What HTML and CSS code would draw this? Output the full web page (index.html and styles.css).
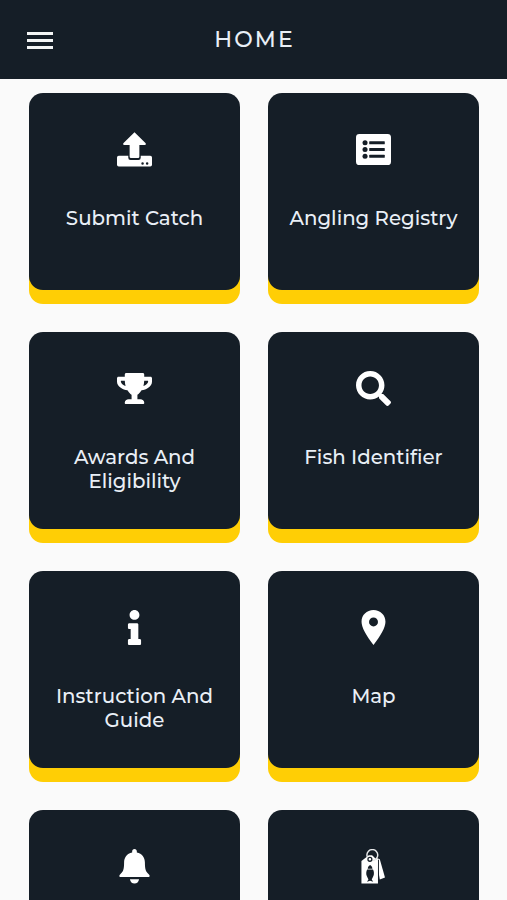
FILE: index.html
```html
<!DOCTYPE html>
<html lang="en">
<head>
<meta charset="utf-8">
<meta name="viewport" content="width=device-width, initial-scale=1">
<title>Home</title>
<link rel="stylesheet" href="styles.css">
</head>
<body>
<header class="topbar">
  <button class="menu" aria-label="Menu"><span></span><span></span><span></span></button>
  <h1 class="title">HOME</h1>
</header>
<main class="grid">
  <a class="card"><div class="face">
    <svg class="icon" viewBox="0 0 36 36"><path d="M18 .2 29.500 11.600q1 1.600-1 1.800H23v12q0 1.400-1.400 1.400h-7.200q-1.400 0-1.400-1.400v-12H7.500q-2-.2-1-1.800z"/><path fill-rule="evenodd" d="M1.800 24.400h9.800v2.200q0 2.300 2.300 2.300h8.200q2.300 0 2.300-2.300v-2.200h9.800q1.800 0 1.800 1.800v7.600q0 1.800-1.800 1.800H1.800Q0 35.600 0 33.800v-7.600q0-1.800 1.800-1.800zM25 32.300a1.300 1.300 0 1 0 2.600 0 1.300 1.300 0 1 0-2.600 0zm4.700 0a1.300 1.300 0 1 0 2.600 0 1.300 1.300 0 1 0-2.600 0z"/></svg>
    <span class="label">Submit Catch</span>
  </div></a>
  <a class="card"><div class="face">
    <svg class="icon" viewBox="0 0 36 36"><rect x="0" y="2" width="36" height="32" rx="3.500"/><g class="ink"><circle cx="9.300" cy="11" r="2.600"/><circle cx="9.300" cy="18" r="2.600"/><circle cx="9.300" cy="25" r="2.600"/><rect x="13.600" y="9.400" width="16" height="3.200" rx=".6"/><rect x="13.600" y="16.400" width="16" height="3.200" rx=".6"/><rect x="13.600" y="23.400" width="16" height="3.200" rx=".6"/></g></svg>
    <span class="label">Angling Registry</span>
  </div></a>
  <a class="card"><div class="face">
    <svg class="icon" viewBox="0 -32 576 576"><path d="M552 64H448V24c0-13.300-10.700-24-24-24H152c-13.300 0-24 10.700-24 24v40H24C10.700 64 0 74.700 0 88v56c0 35.700 22.500 72.400 61.900 100.700 31.500 22.700 69.800 37.100 110 41.700C203.300 338.500 240 360 240 360v72h-48c-35.300 0-64 20.700-64 56v12c0 6.600 5.400 12 12 12h296c6.600 0 12-5.400 12-12v-12c0-35.300-28.700-56-64-56h-48v-72s36.700-21.500 68.100-73.600c40.300-4.600 78.600-19 110-41.700 39.300-28.300 61.900-65 61.900-100.700V88c0-13.300-10.700-24-24-24zM99.300 192.800C74.900 175.200 64 155.600 64 144v-16h64.200c1 32.600 5.800 61.200 12.800 86.200-15.100-5.200-29.200-12.400-41.700-21.400zM512 144c0 16.100-17.700 36.100-35.300 48.800-12.500 9-26.700 16.200-41.800 21.400 7-25 11.800-53.600 12.800-86.200H512v16z"/></svg>
    <span class="label">Awards And<br>Eligibility</span>
  </div></a>
  <a class="card"><div class="face">
    <svg class="icon" viewBox="0 0 512 512"><path d="M505 442.700L405.300 343c-4.500-4.500-10.600-7-17-7H372c27.600-35.300 44-79.700 44-128C416 93.100 322.900 0 208 0S0 93.100 0 208s93.100 208 208 208c48.300 0 92.700-16.400 128-44v16.300c0 6.400 2.500 12.500 7 17l99.700 99.700c9.400 9.400 24.600 9.400 33.900 0l28.300-28.300c9.400-9.400 9.400-24.600.1-34zM208 336c-70.700 0-128-57.200-128-128 0-70.700 57.200-128 128-128 70.700 0 128 57.200 128 128 0 70.700-57.200 128-128 128z"/></svg>
    <span class="label">Fish Identifier</span>
  </div></a>
  <a class="card"><div class="face">
    <svg class="icon" viewBox="-160 0 512 512"><path d="M20 424.229h20V279.771H20c-11.046 0-20-8.954-20-20V212c0-11.046 8.954-20 20-20h112c11.046 0 20 8.954 20 20v212.229h20c11.046 0 20 8.954 20 20V492c0 11.046-8.954 20-20 20H20c-11.046 0-20-8.954-20-20v-47.771c0-11.046 8.954-20 20-20zM96 0C56.235 0 24 32.235 24 72s32.235 72 72 72 72-32.235 72-72S135.764 0 96 0z"/></svg>
    <span class="label">Instruction And<br>Guide</span>
  </div></a>
  <a class="card"><div class="face">
    <svg class="icon" viewBox="0 0 36 36"><path fill-rule="evenodd" d="M18 0C11 0 5.700 5.300 5.700 12c0 6 4.900 14 12.300 24C25.400 26 30.300 18 30.300 12 30.300 5.300 25 0 18 0zm0 7.700a4.600 4.600 0 1 1 0 9.200 4.600 4.600 0 0 1 0-9.200z"/></svg>
    <span class="label">Map</span>
  </div></a>
  <a class="card"><div class="face">
    <svg class="icon" viewBox="0 0 36 36"><path d="M18 0c1.500 0 2.400 1 2.400 2.400v1.300c5.400 1.100 8.300 5.200 8.300 10.300 0 7.200 1 9.600 4.400 12.400.9.900.5 2.500-.8 2.500H3.700c-1.300 0-1.700-1.600-.8-2.500C6.300 23.600 7.300 21.200 7.300 14c0-5.100 2.900-9.200 8.300-10.300V2.400C15.600 1 16.500 0 18 0zM13.300 31h9.400c-.4 2.800-2.200 4.500-4.700 4.500s-4.300-1.700-4.700-4.500z"/></svg>
  </div></a>
  <a class="card"><div class="face">
    <svg class="icon" viewBox="0 0 36 36"><path d="m20.500 9 4 1.500 5.300 18.800-5.300 2z"/><path class="seam" d="M23.100 11v21"/><path d="m13.200 6.400-7.600 6V35.600h17V12.400l-6-6z"/><circle class="ring" cx="16.800" cy="6.200" r="5.600"/><circle class="hole" cx="14.300" cy="10.600" r="2"/><path class="ink" d="M14.500 16.500c1.500 1 2.300 2.200 2.400 3.700h-4.800c.1-1.500.9-2.700 2.400-3.700zm-3 4.500h6c1.100 2.100 1.300 4.600.4 6.800-.5 1.400-1.200 2.500-1.700 3.500l1.500 2.300-3.200-.9-3.200.9 1.500-2.300c-.5-1-1.200-2.100-1.700-3.500-.9-2.200-.7-4.700.4-6.800z"/></svg>
  </div></a>
</main>
</body>
</html>
```
FILE: styles.css
```css
* { box-sizing: border-box; }

html { height: 100%; overflow: hidden; }

body {
  display: flex;
  flex-direction: column;
  margin: 0;
  height: 100%;
  overflow: hidden;
  background: #fafafa;
  font-family: Montserrat, Inter, sans-serif;
  color: #e9eff6;
}

.topbar {
  flex: none;
  display: grid;
  grid-template-columns: 80px 1fr 80px;
  align-items: center;
  height: 79.300px;
  background: #151e27;
}

.menu {
  display: flex;
  flex-direction: column;
  gap: 4px;
  width: 26px;
  margin: 1px 0 0 27px;
  padding: 0;
  border: 0;
  background: none;
}

.menu span { height: 3px; background: #f3f5f5; }

.title {
  margin: 0;
  text-align: center;
  font-size: 22px;
  font-weight: 500;
  line-height: 28px;
  letter-spacing: 2.100px;
  text-indent: 2px;
}

.grid {
  flex: 1;
  min-height: 0;
  overflow: hidden;
  display: grid;
  grid-template-columns: 1fr 1fr;
  gap: 28.500px 28px;
  padding: 14.200px 28px 0 29px;
}

.card {
  height: 210.500px;
  padding-bottom: 13.500px;
  border-radius: 14px;
  background: linear-gradient(transparent 50%, #ffce05 50%);
}

.face {
  display: flex;
  flex-direction: column;
  align-items: center;
  height: 197px;
  padding-top: 38.500px;
  border-radius: 14px;
  background: #151e27;
}

.icon { flex: none; width: 35px; height: 35px; fill: #fff; }
.ink { fill: #151e27; }
.seam { stroke: #151e27; stroke-width: 1; }
.ring { fill: none; stroke: #e8eaeb; stroke-width: 1.500; }
.hole { fill: #fff; stroke: #151e27; stroke-width: 1.300; }

.label {
  margin-top: 39.300px;
  text-align: center;
  font-size: 19.800px;
  font-weight: 500;
  line-height: 24px;
  white-space: nowrap;
}
```
